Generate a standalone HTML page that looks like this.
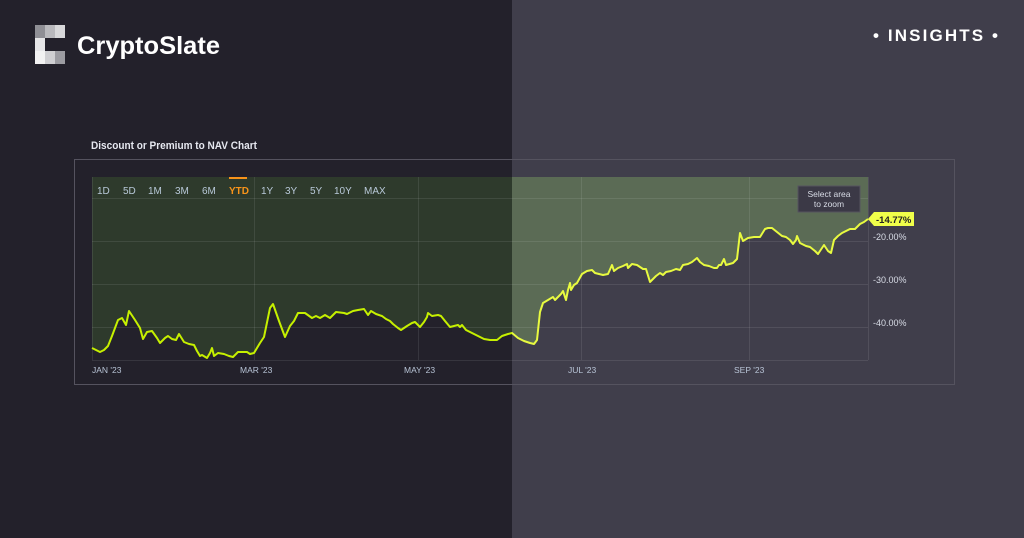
<!DOCTYPE html>
<html><head><meta charset="utf-8"><style>
html,body{margin:0;padding:0;width:1024px;height:538px;overflow:hidden;background:#23212b}
svg{display:block}
text{font-family:"Liberation Sans",sans-serif}
</style></head><body>
<svg width="1024" height="538" viewBox="0 0 1024 538" xmlns="http://www.w3.org/2000/svg">
<defs>
<clipPath id="cl"><rect x="0" y="0" width="512" height="538"/></clipPath>
<clipPath id="cr"><rect x="512" y="0" width="512" height="538"/></clipPath>
<polyline id="ln" fill="none" stroke-width="2" stroke-linejoin="round" points="92,348 100,352 104,350 108,346 112,336 118,320 122,318 126,325 129,311 135,320 140,328 143,339 147,332 152,331 157,338 160,343 165,338 168,336 172,339 176,340 179,334 184,342 189,344 194,345 197,351 200,356 202,355 207,358 210,353 212,348 214,356 218,353 224,354 229,356 233,357 238,352 244,352 247,352 250,354 254,353 260,343 264,337 270,308 273,304 279,321 285,337 290,326 294,321 298,313 305,313 312,318 316,316 320,318 325,315 330,318 336,312 344,313 347,314 353,311 358,310 364,309 368,315 371,311 376,314 382,316 386,319 390,321 393,324 398,328 401,330 407,326 412,323 415,322 420,327 424,322 427,317 428,313 432,316 438,315 441,316 445,321 450,327 454,326 458,325 460,327 462,325 466,330 470,332 478,336 484,339 490,340 497,340 502,336 508,334 512,333 518,338 524,341 530,343 534,344 537,340 540,312 543,303 548,300 553,297 555,300 561,294 563,291 566,300 568,290 570,283 571,290 574,285 577,283 582,274 587,271 592,270 595,273 603,275 608,274 612,265 614,271 618,268 623,266 627,264 628,268 632,264 637,265 643,269 646,269 650,282 656,276 660,273 663,275 666,272 671,271 676,269 680,270 683,265 688,264 692,262 697,258 700,262 704,265 709,266 714,268 717,268 719,265 721,265 724,259 726,265 733,263 737,259 740,233 743,241 748,238 754,237 760,237 765,229 768,228 772,228 777,232 782,236 786,237 790,240 793,244 796,240 797,236 800,243 806,246 810,247 815,251 818,254 822,248 824,245 828,251 831,253 834,240 838,236 842,233 846,231 850,229 855,229 860,224 864,222 868,219"/>
<polygon id="fl" points="92,177 92,348 100,352 104,350 108,346 112,336 118,320 122,318 126,325 129,311 135,320 140,328 143,339 147,332 152,331 157,338 160,343 165,338 168,336 172,339 176,340 179,334 184,342 189,344 194,345 197,351 200,356 202,355 207,358 210,353 212,348 214,356 218,353 224,354 229,356 233,357 238,352 244,352 247,352 250,354 254,353 260,343 264,337 270,308 273,304 279,321 285,337 290,326 294,321 298,313 305,313 312,318 316,316 320,318 325,315 330,318 336,312 344,313 347,314 353,311 358,310 364,309 368,315 371,311 376,314 382,316 386,319 390,321 393,324 398,328 401,330 407,326 412,323 415,322 420,327 424,322 427,317 428,313 432,316 438,315 441,316 445,321 450,327 454,326 458,325 460,327 462,325 466,330 470,332 478,336 484,339 490,340 497,340 502,336 508,334 512,333 518,338 524,341 530,343 534,344 537,340 540,312 543,303 548,300 553,297 555,300 561,294 563,291 566,300 568,290 570,283 571,290 574,285 577,283 582,274 587,271 592,270 595,273 603,275 608,274 612,265 614,271 618,268 623,266 627,264 628,268 632,264 637,265 643,269 646,269 650,282 656,276 660,273 663,275 666,272 671,271 676,269 680,270 683,265 688,264 692,262 697,258 700,262 704,265 709,266 714,268 717,268 719,265 721,265 724,259 726,265 733,263 737,259 740,233 743,241 748,238 754,237 760,237 765,229 768,228 772,228 777,232 782,236 786,237 790,240 793,244 796,240 797,236 800,243 806,246 810,247 815,251 818,254 822,248 824,245 828,251 831,253 834,240 838,236 842,233 846,231 850,229 855,229 860,224 864,222 868,219 868,177"/>
</defs>
<rect x="0" y="0" width="512" height="538" fill="#23212b"/>
<rect x="512" y="0" width="512" height="538" fill="#403e4b"/>
<rect x="74.5" y="159.5" width="880" height="225" fill="none" stroke="#55535f" stroke-width="1"/>
<g clip-path="url(#cl)"><use href="#fl" fill="#2e3a2c"/></g>
<g clip-path="url(#cr)"><use href="#fl" fill="#5b6b55"/></g>
<g stroke="rgba(255,255,255,0.09)" stroke-width="1">
<line x1="92" y1="198.5" x2="868" y2="198.5"/><line x1="92" y1="241.5" x2="868" y2="241.5"/>
<line x1="92" y1="284.5" x2="868" y2="284.5"/><line x1="92" y1="327.5" x2="868" y2="327.5"/>
<line x1="92" y1="360.5" x2="868" y2="360.5"/>
<line x1="254.5" y1="177" x2="254.5" y2="360"/><line x1="418.5" y1="177" x2="418.5" y2="360"/>
<line x1="581.5" y1="177" x2="581.5" y2="360"/><line x1="749.5" y1="177" x2="749.5" y2="360"/>
<line x1="868.5" y1="177" x2="868.5" y2="360"/><line x1="92.5" y1="177" x2="92.5" y2="360"/>
</g>
<g clip-path="url(#cl)"><use href="#ln" stroke="#c6f000"/></g>
<g clip-path="url(#cr)"><use href="#ln" stroke="#e8fa40"/></g>
<rect x="35" y="25" width="10" height="13" fill="#8f8f95"/><rect x="45" y="25" width="10" height="13" fill="#b9b9bd"/><rect x="55" y="25" width="10" height="13" fill="#d8d8da"/>
<rect x="35" y="38" width="10" height="13" fill="#e6e6e8"/>
<rect x="35" y="51" width="10" height="13" fill="#f2f2f2"/><rect x="45" y="51" width="10" height="13" fill="#cfcfd2"/><rect x="55" y="51" width="10" height="13" fill="#9c9ca2"/>
<text x="77" y="54" font-size="25" font-weight="bold" fill="#ffffff" textLength="143" lengthAdjust="spacingAndGlyphs">CryptoSlate</text>
<text x="873" y="41" font-size="17" font-weight="bold" fill="#ffffff" textLength="125" lengthAdjust="spacing">• INSIGHTS •</text>
<text x="91" y="149" font-size="11" font-weight="bold" fill="#e6e8f0" textLength="166" lengthAdjust="spacingAndGlyphs">Discount or Premium to NAV Chart</text>
<g font-size="10" fill="#b8c8d8">
<text x="97" y="194">1D</text><text x="123" y="194">5D</text><text x="148" y="194">1M</text><text x="175" y="194">3M</text><text x="202" y="194">6M</text>
<text x="229" y="194" fill="#f7931a" font-weight="bold">YTD</text>
<text x="261" y="194">1Y</text><text x="285" y="194">3Y</text><text x="310" y="194">5Y</text><text x="334" y="194">10Y</text><text x="364" y="194">MAX</text>
</g>
<rect x="229" y="177" width="18" height="2" fill="#f7931a"/>
<g font-size="8.5" fill="#b8c4d6">
<text x="92" y="373">JAN '23</text><text x="240" y="373">MAR '23</text><text x="404" y="373">MAY '23</text><text x="568" y="373">JUL '23</text><text x="734" y="373">SEP '23</text>
</g>
<g font-size="9" fill="#d8dce6">
<text x="873" y="240">-20.00%</text><text x="873" y="283">-30.00%</text><text x="873" y="326">-40.00%</text>
</g>
<polygon points="868,219 874,212 914,212 914,226 874,226" fill="#f0ff4a"/>
<text x="876" y="223" font-size="9.5" font-weight="bold" fill="#222">-14.77%</text>
<rect x="798" y="186" width="62" height="26" fill="#3b3946" stroke="#55535f"/>
<text x="829" y="197" font-size="8.5" fill="#d8dce6" text-anchor="middle">Select area</text>
<text x="829" y="207" font-size="8.5" fill="#d8dce6" text-anchor="middle">to zoom</text>
</svg>
</body></html>
